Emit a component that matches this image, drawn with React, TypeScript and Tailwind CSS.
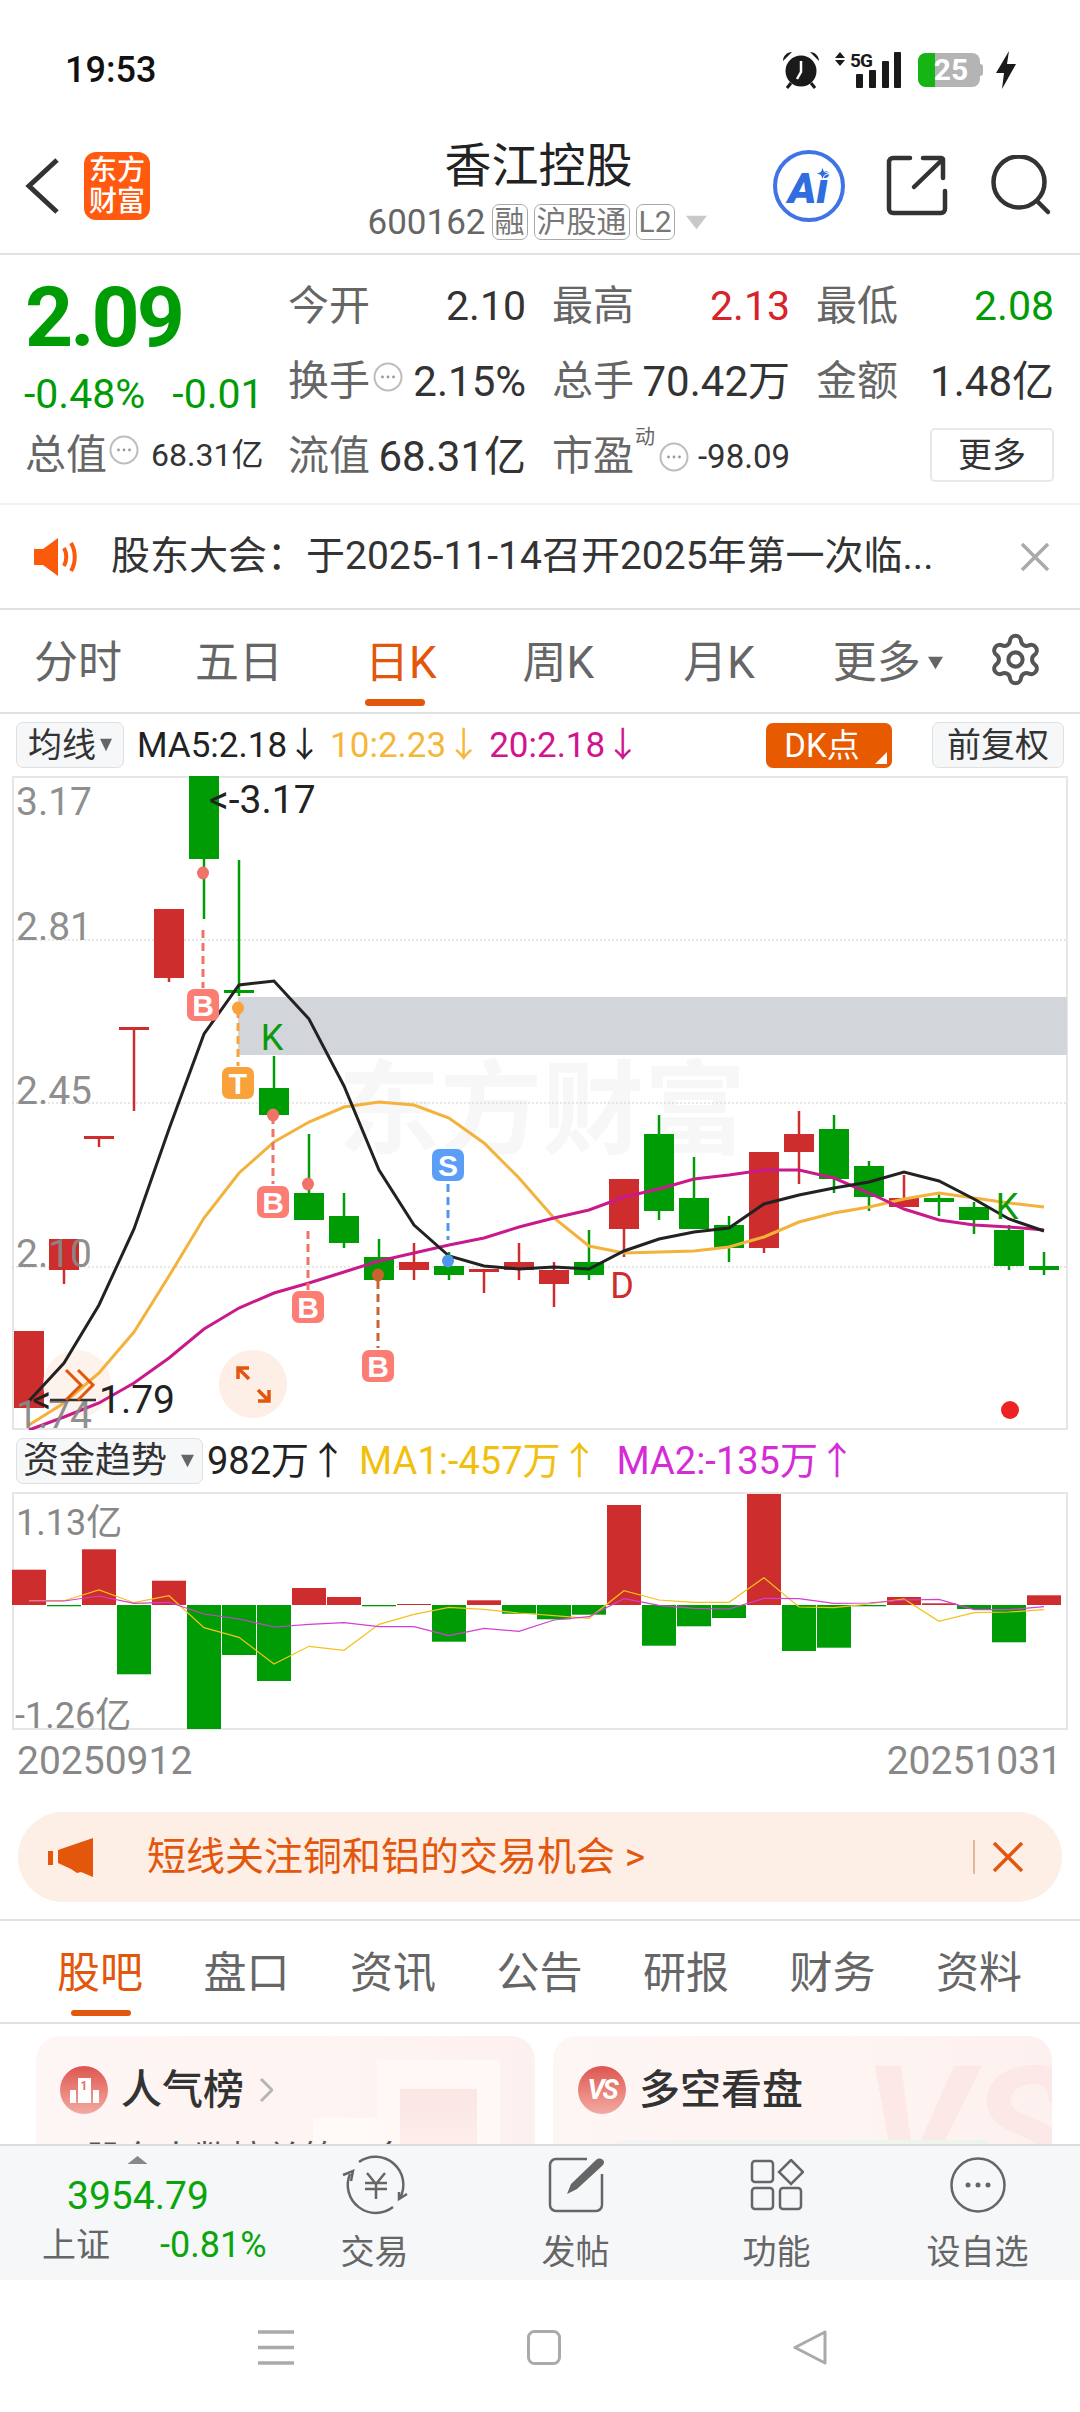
import { Settings } from "lucide-react";
import type { ReactNode } from "react";

const GREEN = "#009c05";
const RED = "#cd2d2d";
const ORANGE = "#e2570c";

type Candle = [string, number, number, number, number];

const g = GREEN;
const r = RED;

// [colour, body top, body bottom, wick top, wick bottom]
const CANDLES: Candle[] = [
  [r, 1331, 1408, 1331, 1408], [r, 1239, 1270, 1239, 1284], [r, 1136, 1139, 1136, 1147],
  [r, 1027, 1030, 1027, 1111], [r, 909, 978, 909, 982], [g, 776, 859, 776, 919],
  [g, 990, 993, 860, 996], [g, 1088, 1115, 1056, 1115], [g, 1193, 1220, 1134, 1220],
  [g, 1216, 1243, 1193, 1248], [g, 1257, 1280, 1239, 1280], [r, 1262, 1270, 1243, 1280],
  [g, 1266, 1275, 1252, 1280], [r, 1269, 1272, 1270, 1293], [r, 1262, 1270, 1243, 1280],
  [r, 1270, 1284, 1262, 1307], [g, 1262, 1275, 1230, 1280], [r, 1179, 1229, 1179, 1257],
  [g, 1134, 1211, 1115, 1220], [g, 1198, 1229, 1157, 1229], [g, 1225, 1248, 1216, 1262],
  [r, 1152, 1248, 1152, 1253], [r, 1134, 1152, 1111, 1184], [g, 1129, 1179, 1115, 1193],
  [g, 1166, 1197, 1161, 1211], [r, 1198, 1207, 1175, 1207], [g, 1198, 1202, 1193, 1216],
  [g, 1207, 1220, 1202, 1234], [g, 1230, 1266, 1225, 1270], [g, 1266, 1270, 1252, 1275],
];

const MA5 = [1401, 1363, 1305, 1229, 1129, 1034, 985, 981, 1019, 1086, 1170, 1225, 1256, 1266, 1269, 1267, 1269, 1251, 1239, 1232, 1228, 1204, 1195, 1188, 1182, 1172, 1181, 1199, 1219, 1231];
const MA10 = [1425, 1403, 1373, 1332, 1276, 1218, 1173, 1142, 1122, 1107, 1102, 1105, 1118, 1143, 1178, 1218, 1246, 1253, 1252, 1251, 1247, 1237, 1222, 1213, 1207, 1199, 1193, 1198, 1203, 1207];
const MA20 = [1430, 1417, 1403, 1383, 1358, 1329, 1308, 1293, 1283, 1272, 1261, 1253, 1245, 1238, 1227, 1218, 1210, 1197, 1189, 1179, 1175, 1170, 1170, 1178, 1193, 1209, 1220, 1225, 1227, 1230];

const BARS = [35.3, -1.3, 55.7, -69.3, 24.3, -124, -50, -76, 17, 8, -1.3, 1, -36.7, 4.7, -8.7, -14.3, -9.7, 100, -40.7, -21.3, -13, 111, -46, -42.7, -1.3, 8, 1.7, -4, -37.3, 9.7];
const FLOW_MA1 = [-4.3, -4.3, -15, -2.3, -9.3, 22.7, 32.3, 59, 41.3, 45.3, 19.3, 9.3, 2.3, 4.3, 8, 10.7, 13.3, -14.3, -5, -2.7, -2.7, -27.3, 2, 2.7, -1, -6, 16.3, 7.7, 7, 4.7];
const FLOW_MA2 = [-4, -4, -9, -1.7, -2.7, 9, 14, 22, 19.3, 17.7, 21.7, 21.7, 30.7, 23.3, 26.3, 15, 11.7, -6.3, 0.3, 3.3, 4, -6.7, -6.3, -1.7, -2, -5, -5.7, 4.7, 4.7, 1.7];

const cx = (i: number) => 29 + 35 * i;
const line = (ys: number[]) => ys.map((y, i) => `${cx(i)},${y}`).join(" ");

const Caret = ({ className = "", color = "#777" }: { className?: string; color?: string }) => (
  <svg viewBox="0 0 14 18" preserveAspectRatio="none" className={className} aria-hidden>
    <path d="M0 1h14L7 17z" fill={color} />
  </svg>
);

const InfoDots = ({ className = "" }: { className?: string }) => (
  <svg viewBox="0 0 30 30" className={`h-[30px] w-[30px] shrink-0 ${className}`} aria-hidden>
    <circle cx="15" cy="15" r="13.5" fill="none" stroke="#bdbdbd" strokeWidth="2" />
    <circle cx="9.500" cy="15" r="1.4" fill="#999" />
    <circle cx="15" cy="15" r="1.4" fill="#999" />
    <circle cx="20.500" cy="15" r="1.4" fill="#999" />
  </svg>
);

const Tag = ({ children }: { children: ReactNode }) => (
  <span className="flex h-[36px] items-center rounded-[7px] border border-[#aaa] px-[2px] text-[30px] leading-none text-[#777]">
    {children}
  </span>
);

const StatusBar = () => (
  <div className="flex h-[90px] shrink-0 items-start justify-between pl-[65px] pr-[63px] pt-[51px]">
    <span className="text-[36px] font-medium leading-[38px] text-[#111]">19:53</span>
    <div className="flex items-center">
      <svg viewBox="0 0 38 38" className="h-[38px] w-[38px]" aria-hidden>
        <circle cx="19" cy="20" r="15.500" fill="#1a1a1a" />
        <path d="M19 10v11l-4 7" stroke="#fff" strokeWidth="2.500" fill="none" />
        <path d="M1 10c0-5 4-9 9-9zM37 10c0-5-4-9-9-9z" fill="#1a1a1a" />
        <path d="M9 32l-4 5M29 32l4 5" stroke="#1a1a1a" strokeWidth="3" />
      </svg>
      <svg viewBox="0 0 68 38" className="ml-[15px] h-[38px] w-[68px]" aria-hidden>
        <path d="M5 1l5 6H0zM5 15l5-6H0z" fill="#1a1a1a" />
        <text x="15" y="16" fontSize="19" fontWeight="700" letterSpacing="-1" fill="#1a1a1a">5G</text>
        <rect x="21" y="23" width="7" height="14" rx="1" fill="#1a1a1a" />
        <rect x="34" y="19" width="7" height="18" rx="1" fill="#1a1a1a" />
        <rect x="47" y="10" width="7" height="27" rx="1" fill="#1a1a1a" />
        <rect x="59" y="1" width="7" height="36" rx="1" fill="#1a1a1a" />
      </svg>
      <div className="relative ml-[15px] flex h-[34px] w-[62px] items-center justify-center overflow-hidden rounded-[8px] bg-[#b4b4b4]">
        <div className="absolute inset-y-0 left-0 w-[17px] bg-[#14b514]" />
        <span className="relative pl-[4px] text-[30px] font-bold leading-none text-white">25</span>
      </div>
      <div className="h-[12px] w-[3px] rounded-r bg-[#b4b4b4]" />
      <svg viewBox="0 0 22 38" className="ml-[12px] h-[38px] w-[22px]" aria-hidden>
        <path d="M14 0L1 22h8L7 38l14-25h-9z" fill="#1a1a1a" />
      </svg>
    </div>
  </div>
);

const Header = () => (
  <header className="relative flex h-[165px] shrink-0 items-center border-b-2 border-[#e2e2e2] pt-[29px]">
    <svg viewBox="0 0 36 58" className="ml-[25px] h-[58px] w-[36px]" aria-hidden>
      <path d="M32 3L4 29l28 26" fill="none" stroke="#333" strokeWidth="5" />
    </svg>
    <div className="ml-[23px] flex h-[68px] w-[66px] flex-col items-center justify-center rounded-[12px] bg-[#ff5a0f] text-[28px] font-medium leading-[31px] text-white">
      <span>东方</span>
      <span>财富</span>
    </div>
    <div className="absolute left-[297px] top-[51px] flex w-[480px] flex-col items-center">
      <span className="ml-[3px] h-[63px] text-[47px] leading-[50px] text-[#222]">香江控股</span>
      <div className="flex items-center gap-[6px]">
        <span className="text-[35px] leading-none text-[#666]">600162</span>
        <Tag>融</Tag>
        <Tag>沪股通</Tag>
        <Tag>L2</Tag>
        <Caret className="ml-[5px] h-[15px] w-[21px]" color="#c8c8c8" />
      </div>
    </div>
    <div className="ml-auto flex items-center">
      <div className="relative flex h-[72px] w-[72px] items-center justify-center rounded-full border-[4px] border-[#3f73e6]">
        <span className="pr-[2px] pt-[4px] text-[43px] font-black italic leading-none text-[#2f6de0]">Ai</span>
        <svg viewBox="0 0 14 14" className="absolute right-[12px] top-[13px] h-[13px] w-[13px]" aria-hidden>
          <path d="M7 0l2 5 5 2-5 2-2 5-2-5-5-2 5-2z" fill="#2f6de0" stroke="#fff" strokeWidth="1" />
        </svg>
      </div>
      <svg viewBox="0 0 62 62" className="ml-[41px] h-[62px] w-[62px]" aria-hidden>
        <path
          d="M24 3H7a4 4 0 0 0-4 4v47a4 4 0 0 0 4 4h48a4 4 0 0 0 4-4V36M28 32L57 4M37 3h18a2 2 0 0 1 2 2v18"
          fill="none"
          stroke="#333"
          strokeWidth="4.500"
          strokeLinecap="round"
        />
      </svg>
      <svg viewBox="0 0 62 62" className="ml-[42px] mr-[28px] h-[62px] w-[62px]" aria-hidden>
        <circle cx="29" cy="27" r="25.500" fill="none" stroke="#333" strokeWidth="4.500" />
        <path d="M47 46l11 11" fill="none" stroke="#333" strokeWidth="4.500" strokeLinecap="round" />
      </svg>
    </div>
  </header>
);

const cellValue = "text-[41px] leading-none";
const cellLabel = "text-[41px] leading-none text-[#666]";
const cellLarge = "text-[42px] leading-none text-[#333]";

const Quote = () => (
  <section className="flex h-[250px] shrink-0 border-b-2 border-[#f2f2f2] pt-[14px]">
    <div className="w-[288px] pl-[25px]">
      <div className="-mt-[1px] flex h-[100px] items-center">
        <span className="text-[84px] font-bold leading-none tracking-[-3px] text-[#009c05]">2.09</span>
      </div>
      <div className="flex h-[52px] items-center text-[41px] leading-none text-[#009c05]">
        <span className="-ml-[1px]">-0.48%</span>
        <span className="ml-[27px]">-0.01</span>
      </div>
      <div className="flex h-[70px] items-center">
        <span className={cellLabel}>总值</span>
        <InfoDots className="ml-[2px] -mt-[10px]" />
        <span className="ml-[12px] text-[32px] leading-none text-[#333]">68.31亿</span>
      </div>
    </div>
    <div className="grid h-[225px] w-[767px] grid-cols-[238px_238px_238px] grid-rows-3 gap-x-[26px]">
      <div className="flex items-center justify-between">
        <span className={cellLabel}>今开</span>
        <span className={`${cellValue} text-[#333]`}>2.10</span>
      </div>
      <div className="flex items-center justify-between">
        <span className={cellLabel}>最高</span>
        <span className={`${cellValue} text-[#d8232a]`}>2.13</span>
      </div>
      <div className="flex items-center justify-between">
        <span className={cellLabel}>最低</span>
        <span className={`${cellValue} text-[#009c05]`}>2.08</span>
      </div>
      <div className="flex items-center">
        <span className={cellLabel}>换手</span>
        <InfoDots className="ml-[3px] -mt-[10px]" />
        <span className={`ml-auto ${cellLarge}`}>2.15%</span>
      </div>
      <div className="flex items-center justify-between">
        <span className={cellLabel}>总手</span>
        <span className={cellLarge}>70.42万</span>
      </div>
      <div className="flex items-center justify-between">
        <span className={cellLabel}>金额</span>
        <span className={cellLarge}>1.48亿</span>
      </div>
      <div className="flex items-center justify-between">
        <span className={cellLabel}>流值</span>
        <span className={cellLarge}>68.31亿</span>
      </div>
      <div className="relative flex items-center">
        <span className={cellLabel}>市盈</span>
        <span className="absolute left-[83px] top-[8px] text-[20px] leading-none text-[#666]">动</span>
        <InfoDots className="ml-[25px]" />
        <span className="ml-auto text-[33px] leading-none text-[#333]">-98.09</span>
      </div>
      <div className="flex items-center justify-end">
        <span className="-mt-[3px] flex h-[54px] w-[124px] items-center justify-center rounded-[5px] border-2 border-[#e8e8e8] text-[34px] leading-none text-[#333]">
          更多
        </span>
      </div>
    </div>
  </section>
);

const Notice = () => (
  <div className="flex h-[105px] shrink-0 items-center border-b-2 border-[#e2e2e2] pl-[34px] pr-[30px]">
    <svg viewBox="0 0 44 38" className="h-[38px] w-[44px]" aria-hidden>
      <path d="M0 11h9L24 0v38L9 27H0z" fill="#fa5a0a" />
      <path d="M30 10c3 5 3 13 0 18M37 5c5 8 5 20 0 28" fill="none" stroke="#fa5a0a" strokeWidth="4" />
    </svg>
    <span className="ml-[33px] text-[39px] leading-none text-[#333]">股东大会：于2025-11-14召开2025年第一次临...</span>
    <svg viewBox="0 0 30 30" className="ml-auto h-[30px] w-[30px]" aria-hidden>
      <path d="M2 2l26 26M28 2L2 28" stroke="#aaa" strokeWidth="3.500" />
    </svg>
  </div>
);

const PERIODS = [
  { label: "分时", gap: "ml-[34px]" },
  { label: "五日", gap: "ml-[73px]" },
  { label: "日K", gap: "ml-[82px]", active: true },
  { label: "周K", gap: "ml-[86px]" },
  { label: "月K", gap: "ml-[89px]" },
  { label: "更多", gap: "ml-[78px]" },
];

const PeriodTabs = () => (
  <div className="flex h-[104px] shrink-0 items-center border-b-2 border-[#e2e2e2] pt-[3px]">
    {PERIODS.map((t) => (
      <span
        key={t.label}
        className={`relative text-[44px] leading-none ${t.gap} ${t.active ? "text-[#e2570c]" : "text-[#666]"}`}
      >
        {t.label}
        {t.active && <span className="absolute -bottom-[21px] left-0 h-[7px] w-[60px] rounded-full bg-[#e2570c]" />}
      </span>
    ))}
    <Caret className="ml-[7px] h-[14px] w-[15px]" color="#666" />
    <Settings className="ml-[44px] -mt-[6px] h-[57px] w-[57px] text-[#555]" strokeWidth={1.7} />
  </div>
);

const MaToolbar = () => (
  <div className="flex h-[62px] shrink-0 items-center pl-[16px] pr-[16px] text-[35px] leading-none">
    <div className="flex h-[46px] w-[108px] items-center justify-center gap-[4px] rounded-[7px] border border-[#e0e0e0] bg-[#f6f7f9] text-[#333]">
      <span className="text-[34px]">均线</span>
      <Caret className="h-[14px] w-[12px]" color="#666" />
    </div>
    <span className="ml-[13px] text-[#222]">MA5:2.18↓</span>
    <span className="ml-[8px] text-[#f5b73b]">10:2.23↓</span>
    <span className="ml-[8px] text-[#d0158f]">20:2.18↓</span>
    <div className="relative ml-auto flex h-[45px] w-[126px] items-center justify-center rounded-[7px] bg-[#e85a00] pr-[14px] text-[33px] text-white">
      DK点
      <svg viewBox="0 0 12 12" className="absolute bottom-[4px] right-[5px] h-[12px] w-[12px]" aria-hidden>
        <path d="M12 0v12H0z" fill="#fff" />
      </svg>
    </div>
    <div className="ml-[40px] flex h-[46px] w-[132px] items-center justify-center rounded-[7px] border border-[#e0e0e0] bg-[#f6f7f9] text-[34px] text-[#333]">
      前复权
    </div>
  </div>
);

const Badge = ({ x, y, fill, letter }: { x: number; y: number; fill: string; letter: string }) => (
  <g>
    <rect x={x - 16} y={y - 16} width="32" height="32" rx="7" fill={fill} />
    <text x={x} y={y + 11} textAnchor="middle" fontSize="30" fontWeight="700" fill="#fff" className="[font-family:'Liberation_Sans',sans-serif]">
      {letter}
    </text>
  </g>
);

const Signal = ({ x, y1, y2, dot, color }: { x: number; y1: number; y2: number; dot: number; color: string }) => (
  <g>
    <line x1={x} y1={y1} x2={x} y2={y2} stroke={color} strokeWidth="3" strokeDasharray="8 5" />
    <ellipse cx={x} cy={dot} rx="6" ry="6.500" fill={color} />
  </g>
);

const axisLabel = { fontSize: 39, fill: "#888", fillOpacity: 0.95 };

const KlineChart = () => (
  <div className="ml-[12px] h-[654px] w-[1056px] shrink-0 border-2 border-[#e6e6e6]">
    <svg viewBox="12 776 1056 654" className="-m-[2px] block h-[654px] w-[1056px]" aria-label="K线图">
      <text x="338" y="1146" fontSize="102" fontWeight="700" fill="#f7f7f7">东方财富</text>
      {[940, 1103, 1267].map((y) => (
        <line key={y} x1="12" x2="1067" y1={y} y2={y} stroke="#cfcfcf" strokeWidth="1" strokeDasharray="2 2" />
      ))}
      <rect x="238" y="997" width="829" height="58" fill="#d2d5da" />
      {CANDLES.map(([color, top, bottom, wt, wb], i) => (
        <g key={i}>
          <line x1={cx(i)} x2={cx(i)} y1={wt} y2={wb} stroke={color} strokeWidth="2.500" />
          <rect x={cx(i) - 15} y={top} width="30" height={bottom - top} fill={color} />
        </g>
      ))}
      <circle cx="77" cy="1384" r="34" fill="#fdeee6" fillOpacity="0.75" />
      <polyline points={line(MA10)} fill="none" stroke="#f3b23c" strokeWidth="3" />
      <polyline points={line(MA20)} fill="none" stroke="#c81a8a" strokeWidth="3" />
      <polyline points={line(MA5)} fill="none" stroke="#222" strokeWidth="3" />

      <text x="16" y="815" {...axisLabel}>3.17</text>
      <text x="16" y="940" {...axisLabel}>2.81</text>
      <text x="16" y="1104" {...axisLabel}>2.45</text>
      <text x="16" y="1267" {...axisLabel}>2.10</text>
      <text x="16" y="1428" {...axisLabel}>1.74</text>
      <text x="209" y="813" fontSize="39" fill="#222">{"<-3.17"}</text>
      <text x="32" y="1413" fontSize="38" fill="#222">{"<"}</text>
      <line x1="50" x2="96" y1="1400" y2="1400" stroke="#333" strokeWidth="2.500" />
      <text x="99" y="1413" fontSize="39" fill="#222">1.79</text>

      <Signal x={203} y1={930} y2={988} dot={873} color="#f0736a" />
      <Signal x={238} y1={1010} y2={1066} dot={1008} color="#f9a23c" />
      <Signal x={273} y1={1116} y2={1184} dot={1115} color="#f0736a" />
      <Signal x={308} y1={1231} y2={1290} dot={1184} color="#f0736a" />
      <Signal x={378} y1={1281} y2={1348} dot={1275} color="#c9632f" />
      <Signal x={448} y1={1184} y2={1240} dot={1261} color="#4f97ee" />
      <Badge x={203} y={1005} fill="#fb7d73" letter="B" />
      <Badge x={238} y={1083} fill="#f9a23c" letter="T" />
      <Badge x={273} y={1202} fill="#fb7d73" letter="B" />
      <Badge x={308} y={1307} fill="#fb7d73" letter="B" />
      <Badge x={378} y={1366} fill="#fb7d73" letter="B" />
      <Badge x={448} y={1165} fill="#5b9ef5" letter="S" />
      <text x="272" y="1050" textAnchor="middle" fontSize="36" fill="#0a9a0a">K</text>
      <text x="1007" y="1219" textAnchor="middle" fontSize="36" fill="#0a9a0a">K</text>
      <text x="622" y="1298" textAnchor="middle" fontSize="36" fill="#cd2d2d">D</text>
      <circle cx="1010" cy="1410" r="9" fill="#ee2222" />

      <path d="M66 1370l15 15-15 15M78 1370l15 15-15 15" fill="none" stroke={ORANGE} strokeWidth="3" />
      <circle cx="253" cy="1384" r="34" fill="#fdeee6" />
      <path d="M238 1379v-11h11M238 1368l11 11M269 1390v11h-11M269 1401l-11-11" fill="none" stroke={ORANGE} strokeWidth="3.500" />
    </svg>
  </div>
);

const FlowToolbar = () => (
  <div className="flex h-[62px] shrink-0 items-center pl-[16px] text-[38px] leading-none">
    <div className="flex h-[46px] w-[187px] items-center rounded-[7px] border border-[#e0e0e0] bg-[#f6f7f9] pl-[6px] text-[36px] text-[#333]">
      <span>资金趋势</span>
      <Caret className="ml-[14px] h-[14px] w-[13px]" color="#666" />
    </div>
    <span className="ml-[4px] text-[#222]">982万↑</span>
    <span className="ml-[12px] text-[#f2bf0e]">MA1:-457万↑</span>
    <span className="ml-[18px] text-[#d52cd8]">MA2:-135万↑</span>
  </div>
);

const flowLine = (ys: number[]) => ys.map((y, i) => `${29 + 35 * i},${1605 + y}`).join(" ");

const FlowChart = () => (
  <div className="ml-[12px] h-[238px] w-[1056px] shrink-0 border-2 border-[#e6e6e6]">
    <svg viewBox="12 1492 1056 238" className="-m-[2px] block h-[238px] w-[1056px]" aria-label="资金趋势图">
      {BARS.map((v, i) => (
        <rect
          key={i}
          x={12 + 35 * i}
          y={v > 0 ? 1605 - v : 1605}
          width="34"
          height={Math.abs(v)}
          fill={v > 0 ? RED : GREEN}
        />
      ))}
      <polyline points={flowLine(FLOW_MA1)} fill="none" stroke="#f2c21a" strokeWidth="1.200" />
      <polyline points={flowLine(FLOW_MA2)} fill="none" stroke="#d33fd6" strokeWidth="1.200" />
      <text x="16" y="1535" fontSize="36" fill="#888">1.13亿</text>
      <text x="15" y="1728" fontSize="36" fill="#888">-1.26亿</text>
    </svg>
  </div>
);

const ChartDates = () => (
  <div className="flex h-[65px] shrink-0 items-center justify-between pb-[2px] pl-[17px] pr-[18px] text-[39px] leading-none text-[#888]">
    <span>20250912</span>
    <span>20251031</span>
  </div>
);

const PromoBanner = () => (
  <div className="mx-[18px] mt-[17px] flex h-[90px] shrink-0 items-center rounded-full bg-[#fdeee6]">
    <svg viewBox="0 0 45 39" className="ml-[30px] h-[39px] w-[45px]" aria-hidden>
      <path d="M0 13h5v14H0zM10 12L45 0v39l-12-5-4 1-6-4-13-6z" fill={ORANGE} />
    </svg>
    <span className="ml-[54px] text-[39px] leading-none text-[#e2570c]">短线关注铜和铝的交易机会 &gt;</span>
    <div className="ml-auto h-[34px] w-[2px] bg-[#e0b8a0]" />
    <svg viewBox="0 0 32 30" className="ml-[17px] mr-[38px] h-[30px] w-[32px]" aria-hidden>
      <path d="M2 1l28 28M30 1L2 29" stroke={ORANGE} strokeWidth="3.500" />
    </svg>
  </div>
);

const NEWS_TABS = ["股吧", "盘口", "资讯", "公告", "研报", "财务", "资料"];

const NewsTabs = () => (
  <div className="mt-[17px] flex h-[105px] shrink-0 items-center gap-[60.500px] border-y-2 border-[#e2e2e2] pl-[57px] pt-[3px]">
    {NEWS_TABS.map((t, i) => (
      <span key={t} className={`relative text-[43px] leading-none ${i === 0 ? "text-[#e2570c]" : "text-[#666]"}`}>
        {t}
        {i === 0 && <span className="absolute -bottom-[21px] left-[14px] h-[6px] w-[60px] rounded-full bg-[#e2570c]" />}
      </span>
    ))}
  </div>
);

const Cards = () => (
  <div className="flex h-[120px] shrink-0 gap-[18px] overflow-hidden pl-[36px] pt-[12px]">
    <div className="relative h-[130px] w-[499px] overflow-hidden rounded-t-[24px] bg-gradient-to-r from-[#fef6f4] via-[#fef5f3] to-[#fdf1ef]">
      <div className="absolute left-[341px] top-[24px] h-[106px] w-[123px] bg-[#fff8f7]" />
      <div className="absolute left-[277px] top-[82px] h-[48px] w-[64px] bg-[#fff9f8]" />
      <div className="absolute left-[364px] top-[53px] h-[77px] w-[77px] bg-gradient-to-b from-[#fbe6e4] to-[#fdf0ee]" />
      <div className="relative ml-[24px] mt-[30px] flex items-center">
        <div className="flex h-[48px] w-[48px] items-end justify-center gap-[2px] rounded-full bg-gradient-to-b from-[#dc5550] to-[#f2aaa2] pb-[11px]">
          <span className="h-[13px] w-[6px] bg-white" />
          <span className="flex h-[25px] w-[13px] justify-center bg-white text-[12px] font-bold leading-[16px] text-[#e0706a]">1</span>
          <span className="h-[13px] w-[6px] bg-white" />
        </div>
        <span className="ml-[13px] text-[41px] font-medium leading-none text-[#333]">人气榜</span>
        <svg viewBox="0 0 13 24" className="ml-[16px] h-[24px] w-[13px]" aria-hidden>
          <path d="M1 1l11 11L1 23" fill="none" stroke="#b5b5b5" strokeWidth="3" />
        </svg>
      </div>
      <div className="relative ml-[50px] mt-[28px] text-[36px] leading-none text-[#555]">股东人数榜单第一名</div>
    </div>
    <div className="relative h-[130px] w-[499px] overflow-hidden rounded-t-[24px] bg-gradient-to-r from-[#fef6f4] via-[#fef5f3] to-[#fdf1ef]">
      <span className="absolute left-[310px] top-[8px] text-[170px] font-bold italic leading-none text-[#fce9e7]">VS</span>
      <div className="relative ml-[25px] mt-[30px] flex items-center">
        <div className="flex h-[48px] w-[48px] items-center justify-center rounded-full bg-gradient-to-b from-[#dc5550] to-[#f2aaa2] text-[27px] font-bold italic leading-none tracking-[-2px] text-white">
          VS
        </div>
        <span className="ml-[13px] text-[41px] font-medium leading-none text-[#333]">多空看盘</span>
      </div>
      <div className="relative ml-[60px] mt-[26px] h-[20px] w-[380px] rounded-t-[10px] bg-gradient-to-r from-[#f4f4f4] to-[#ecf5ec]" />
    </div>
  </div>
);

const NavItem = ({ icon, label }: { icon: ReactNode; label: string }) => (
  <div className="flex w-[201px] flex-col items-center">
    <div className="flex h-[60px] items-center justify-center">{icon}</div>
    <span className="mt-[20px] text-[34px] leading-none text-[#666]">{label}</span>
  </div>
);

const BottomNav = () => (
  <nav className="flex h-[136px] shrink-0 border-t-2 border-[#dcdcdc] bg-[#f5f7f9] pt-[9px]">
    <div className="relative w-[274px]">
      <svg viewBox="0 0 20 8" className="absolute left-[127px] top-[1px] h-[8px] w-[21px]" aria-hidden>
        <path d="M10 0l10 8H0z" fill="#888" />
      </svg>
      <div className="pt-[22px] pl-[67px] text-[39px] leading-none text-[#0aa50a]">3954.79</div>
      <div className="mt-[11px] flex items-center pl-[42px]">
        <span className="text-[34px] leading-none text-[#666]">上证</span>
        <span className="ml-[50px] text-[36px] leading-none text-[#0aa50a]">-0.81%</span>
      </div>
    </div>
    <NavItem
      label="交易"
      icon={
        <svg viewBox="0 0 66 60" className="h-[60px] w-[66px]" aria-hidden>
          <g fill="none" stroke="#666" strokeWidth="2.500">
            <path d="M17 7A28 28 0 0 1 58 43" />
            <path d="M51 52A28 28 0 0 1 8 19" />
            <path d="M57 37l0 7 8-5M1 20l10-4-2 10" />
            <path d="M25 18l9 11 9-11M23 28h22M23 34h22M34 29v15" />
          </g>
        </svg>
      }
    />
    <NavItem
      label="发帖"
      icon={
        <svg viewBox="0 0 58 58" className="h-[58px] w-[58px]" aria-hidden>
          <path
            d="M40 3H9a6 6 0 0 0-6 6v40a6 6 0 0 0 6 6h40a6 6 0 0 0 6-6V18"
            fill="none"
            stroke="#666"
            strokeWidth="2.500"
          />
          <path d="M20 38l4-10L49 4c2-2 5-2 7 0s1 4-1 6L30 33z" fill="#666" />
        </svg>
      }
    />
    <NavItem
      label="功能"
      icon={
        <svg viewBox="0 0 54 52" className="h-[52px] w-[54px]" aria-hidden>
          <g fill="none" stroke="#666" strokeWidth="2.500">
            <rect x="2" y="2" width="21" height="21" rx="3" />
            <path d="M41 1l12 12-12 12-12-12z" />
            <rect x="2" y="29" width="21" height="21" rx="3" />
            <rect x="30" y="29" width="21" height="21" rx="3" />
          </g>
        </svg>
      }
    />
    <NavItem
      label="设自选"
      icon={
        <svg viewBox="0 0 56 56" className="h-[56px] w-[56px]" aria-hidden>
          <circle cx="28" cy="28" r="26.500" fill="none" stroke="#666" strokeWidth="2.500" />
          <circle cx="18" cy="28" r="2.500" fill="#666" />
          <circle cx="28" cy="28" r="2.500" fill="#666" />
          <circle cx="38" cy="28" r="2.500" fill="#666" />
        </svg>
      }
    />
  </nav>
);

const AndroidNav = () => (
  <div className="flex h-[133px] shrink-0 items-start bg-white pl-[258px] pt-[50px]">
    <svg viewBox="0 0 36 35" className="h-[35px] w-[36px]" aria-hidden>
      <path d="M0 2h36M0 17.500h36M0 33h36" stroke="#aaa" strokeWidth="3.500" />
    </svg>
    <svg viewBox="0 0 34 35" className="ml-[233px] h-[35px] w-[34px]" aria-hidden>
      <rect x="1.500" y="1.500" width="31" height="32" rx="6" fill="none" stroke="#aaa" strokeWidth="3" />
    </svg>
    <svg viewBox="0 0 36 35" className="ml-[231px] h-[35px] w-[36px]" aria-hidden>
      <path d="M33 2v31L3 17.500z" fill="none" stroke="#aaa" strokeWidth="3" strokeLinejoin="round" />
    </svg>
  </div>
);

export default function App() {
  return (
    <div className="flex h-[2412px] w-[1080px] flex-col overflow-hidden bg-white [font-family:Roboto,'Noto_Sans_CJK_SC',sans-serif]">
      <StatusBar />
      <Header />
      <Quote />
      <Notice />
      <PeriodTabs />
      <MaToolbar />
      <KlineChart />
      <FlowToolbar />
      <FlowChart />
      <ChartDates />
      <PromoBanner />
      <NewsTabs />
      <Cards />
      <BottomNav />
      <AndroidNav />
    </div>
  );
}
